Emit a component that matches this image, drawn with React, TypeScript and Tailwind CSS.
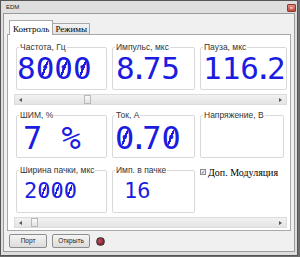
import type { ReactNode } from "react";

const sans = "font-['Liberation_Sans',Arial,sans-serif]";
const serif = "font-['Liberation_Serif','Times_New_Roman',serif]";
const lcd = "font-['DejaVu_Sans_Mono',monospace]";

const slashBg =
  "bg-[linear-gradient(to_bottom_right,transparent_40%,#1c1ce0_40%,#1c1ce0_60%,transparent_60%)] bg-no-repeat";

function Value({ text, size, pad, top, slash }: { text: string; size: string; pad: string; top: string; slash: string }) {
  // узкая точка и перечёркнутый ноль, как в ЖК-шрифте
  return (
    <div className={`${lcd} ${size} ${pad} ${top} leading-none text-[#1c1ce0] whitespace-pre`}>
      {text.split("").map((ch, i) => {
        if (ch === ".")
          return (
            <span key={i} className="inline-block w-[8px]">
              <span className="-ml-[5px]">.</span>
            </span>
          );
        if (ch === "0")
          return (
            <span key={i} className={`inline-block ${slashBg} ${slash}`}>
              0
            </span>
          );
        return <span key={i}>{ch}</span>;
      })}
    </div>
  );
}

function Group({ title, children, h }: { title: string; children?: ReactNode; h: string }) {
  return (
    <fieldset className={`${h} border border-[#d9d9d9] rounded-[2px] bg-white`}>
      <legend className={`${sans} ml-[2px] px-[1px] text-[8.5px] leading-[10px] text-[#333]`}>{title}</legend>
      {children}
    </fieldset>
  );
}

function ScrollBar({ thumb }: { thumb: string }) {
  return (
    <div className="ml-[6px] mr-[3px] h-[11px] border border-[#dcdcdc] bg-gradient-to-b from-[#f2f2f2] to-[#e4e4e4] flex items-center">
      <span className="ml-[4px] w-0 h-0 border-y-[2px] border-y-transparent border-r-[3px] border-r-[#555]" />
      <span className={`${thumb} w-[7px] h-[9px] border border-[#b8b8b8] bg-gradient-to-b from-[#fafafa] to-[#e2e2e2]`} />
      <span className="ml-auto mr-[4px] w-0 h-0 border-y-[2px] border-y-transparent border-l-[3px] border-l-[#555]" />
    </div>
  );
}

export default function App() {
  const big = "bg-[length:6px_15px] bg-[position:6.5px_8px]";
  const small = "bg-[length:4px_11px] bg-[position:4.6px_5px]";
  return (
    <div className="w-[300px] h-[257px] bg-[#6e6e6e] overflow-hidden">
      <div className="w-[298px] h-[256px] border border-[#555] bg-[#dedede] flex flex-col">
        <div className="h-[11px] flex items-center pl-[5px] pr-[1px]">
          <span className={`${sans} text-[6px] text-[#222] leading-none`}>EDM</span>
          <span className="ml-auto mt-[3px] w-[9px] h-[8px] rounded-[1px] bg-gradient-to-b from-[#e08a80] to-[#c4463a] border border-[#8a3a30] flex items-center justify-center text-white text-[6px] leading-none">
            ×
          </span>
        </div>
        <div className="flex-1 mx-[2px] mb-[3px] mt-[1px] border border-[#9a9a9a] bg-[#f0f0f0] flex flex-col">
          <div className="flex items-end ml-[5px] mt-[5px] h-[15px]">
            <div className={`${serif} h-[15px] px-[3px] border border-b-0 border-[#a8a8a8] bg-white text-[9px] leading-[14px] text-black relative z-10 -mb-px pt-[1px]`}>
              Контроль
            </div>
            <div className={`${serif} h-[11px] px-[2px] border border-l-0 border-b-0 border-[#a8a8a8] bg-gradient-to-b from-[#f3f3f3] to-[#e1e1e1] text-[9px] leading-[11px] text-black`}>
              Режимы
            </div>
          </div>
          <div className="ml-[3px] mr-[3px] h-[197px] border border-[#a8a8a8] bg-white pt-[7px]">
            <div className="ml-[8px] mr-[4px] grid grid-cols-[91px_83px_84px] gap-x-[5px]">
              <Group title="Частота, Гц" h="h-[48px]">
                <Value text="8000" size="text-[31px]" pad="pl-[0px]" top="mt-[1px]" slash={big} />
              </Group>
              <Group title="Импульс, мкс" h="h-[48px]">
                <Value text="8.75" size="text-[31px]" pad="pl-[3px]" top="mt-[1px]" slash={big} />
              </Group>
              <Group title="Пауза, мкс" h="h-[48px]">
                <Value text="116.2" size="text-[31px]" pad="pl-[2px]" top="mt-[1px]" slash={big} />
              </Group>
            </div>
            <div className="mt-[4px]">
              <ScrollBar thumb="ml-[62px]" />
            </div>
            <div className="mt-[5px] ml-[8px] mr-[4px] grid grid-cols-[91px_83px_84px] gap-x-[5px] gap-y-[7px]">
              <Group title="ШИМ, %" h="h-[48px]">
                <Value text="7 %" size="text-[32px]" pad="pl-[6px]" top="mt-[2px]" slash={big} />
              </Group>
              <Group title="Ток, А" h="h-[48px]">
                <Value text="0.70" size="text-[32px]" pad="pl-[2px]" top="mt-[2px]" slash={big} />
              </Group>
              <Group title="Напряжение, В" h="h-[48px]" />
              <Group title="Ширина пачки, мкс" h="h-[48px]">
                <Value text="2000" size="text-[22px]" pad="pl-[7px]" top="mt-[5px]" slash={small} />
              </Group>
              <Group title="Имп. в пачке" h="h-[48px]">
                <Value text="16" size="text-[22px]" pad="pl-[11px]" top="mt-[5px]" slash={small} />
              </Group>
              <div className="flex items-start pt-[4px]">
                <span className="w-[6px] h-[6px] border border-[#8a8a8a] bg-[#eef0f8] flex items-center justify-center text-[5px] leading-none text-[#2a3a8a]">
                  ✓
                </span>
                <span className={`${serif} ml-[2px] text-[10px] leading-[7px] text-black`}>Доп. Модуляция</span>
              </div>
            </div>
            <div className="mt-[4px]">
              <ScrollBar thumb="ml-[9px]" />
            </div>
          </div>
          <div className="flex items-center ml-[5px] mt-[3px] gap-[5px]">
            <button className={`${sans} w-[38px] h-[14px] border border-[#8e8e8e] rounded-[2px] bg-gradient-to-b from-[#f4f4f4] to-[#dcdcdc] text-[6.5px] leading-none text-[#222]`}>
              Порт
            </button>
            <button className={`${sans} w-[38px] h-[14px] border border-[#8e8e8e] rounded-[2px] bg-gradient-to-b from-[#f4f4f4] to-[#dcdcdc] text-[6.5px] leading-none text-[#222]`}>
              Открыть
            </button>
            <span className="ml-[1px] w-[9px] h-[9px] rounded-full border border-[#333] bg-[radial-gradient(circle_at_40%_40%,#c05060,#6a1020)]" />
          </div>
        </div>
      </div>
    </div>
  );
}
